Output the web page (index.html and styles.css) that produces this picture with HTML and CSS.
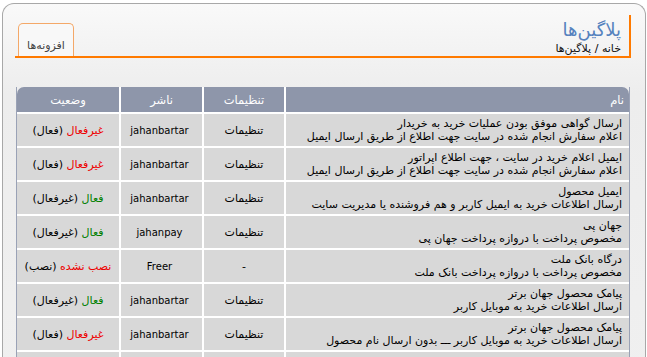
FILE: index.html
```html
<!DOCTYPE html>
<html lang="fa" dir="rtl">
<head>
<meta charset="utf-8">
<title>پلاگین‌ها</title>
<link rel="stylesheet" href="styles.css">
</head>
<body>
<div class="frame">
  <div class="head">
    <div class="titles">
      <h1 class="title">پلاگین‌ها</h1>
      <div class="crumbs"><a href="#">خانه</a> / <a href="#">پلاگین‌ها</a></div>
    </div>
    <div class="tab">افزونه‌ها</div>
  </div>

  <table class="grid">
    <thead>
      <tr>
        <th class="c-name">نام</th>
        <th class="c-set">تنظیمات</th>
        <th class="c-pub">ناشر</th>
        <th class="c-state">وضعیت</th>
      </tr>
    </thead>
    <tbody>
      <tr>
        <td class="c-name">ارسال گواهی موفق بودن عملیات خرید به خریدار<br>اعلام سفارش انجام شده در سایت جهت اطلاع از طریق ارسال ایمیل</td>
        <td>تنظیمات</td>
        <td class="ltr">jahanbartar</td>
        <td><span class="off">غیرفعال</span> <a href="#">(فعال)</a></td>
      </tr>
      <tr>
        <td class="c-name">ایمیل اعلام خرید در سایت ، جهت اطلاع اپراتور<br>اعلام سفارش انجام شده در سایت جهت اطلاع از طریق ارسال ایمیل</td>
        <td>تنظیمات</td>
        <td class="ltr">jahanbartar</td>
        <td><span class="off">غیرفعال</span> <a href="#">(فعال)</a></td>
      </tr>
      <tr>
        <td class="c-name">ایمیل محصول<br>ارسال اطلاعات خرید به ایمیل کاربر و هم فروشنده یا مدیریت سایت</td>
        <td>تنظیمات</td>
        <td class="ltr">jahanbartar</td>
        <td><span class="on">فعال</span> <a href="#">(غیرفعال)</a></td>
      </tr>
      <tr>
        <td class="c-name">جهان پی<br>مخصوص پرداخت با دروازه پرداخت جهان پی</td>
        <td>تنظیمات</td>
        <td class="ltr">jahanpay</td>
        <td><span class="on">فعال</span> <a href="#">(غیرفعال)</a></td>
      </tr>
      <tr>
        <td class="c-name">درگاه بانک ملت<br>مخصوص پرداخت با دروازه پرداخت بانک ملت</td>
        <td>-</td>
        <td class="ltr">Freer</td>
        <td><span class="off">نصب نشده</span> <a href="#">(نصب)</a></td>
      </tr>
      <tr>
        <td class="c-name">پیامک محصول جهان برتر<br>ارسال اطلاعات خرید به موبایل کاربر</td>
        <td>تنظیمات</td>
        <td class="ltr">jahanbartar</td>
        <td><span class="on">فعال</span> <a href="#">(غیرفعال)</a></td>
      </tr>
      <tr>
        <td class="c-name">پیامک محصول جهان برتر<br>ارسال اطلاعات خرید به موبایل کاربر ـــ بدون ارسال نام محصول</td>
        <td>تنظیمات</td>
        <td class="ltr">jahanbartar</td>
        <td><span class="off">غیرفعال</span> <a href="#">(فعال)</a></td>
      </tr>
      <tr>
        <td class="c-name"></td>
        <td></td>
        <td></td>
        <td></td>
      </tr>
    </tbody>
  </table>
</div>
</body>
</html>
```

FILE: styles.css
```css
html, body {
  margin: 0;
  padding: 0;
  background: #ffffff;
}

body {
  font-family: "DejaVu Sans", sans-serif;
  font-size: 11px;
  color: #000;
  overflow: hidden;
}

.frame {
  margin: 3px 1px 0 2px;
  border: 1px solid #a8a8a8;
  border-bottom: none;
  border-radius: 12px 12px 0 0;
  background: linear-gradient(#f9f9f9 0, #ededed 90px, #f0f0f0 100%);
  min-height: 400px;
}

.head {
  display: flex;
  align-items: stretch;
  margin: 11px 14px 0 12px;
  height: 41px;
  border-right: 2px solid #ff7a00;
  border-bottom: 2px solid #ff7a00;
}

.titles {
  padding-right: 8px;
  display: flex;
  flex-direction: column;
}

.title {
  margin: 4px 0 0;
  font-size: 18px;
  font-weight: normal;
  line-height: 22px;
  color: #5582be;
}

.crumbs {
  margin-top: 1px;
  line-height: 14px;
}

.crumbs a {
  color: #111;
  text-decoration: none;
}

.tab {
  margin-right: auto;
  margin-left: 3px;
  margin-top: 8px;
  width: 56px;
  border: 1px solid #f4a868;
  border-bottom: none;
  border-radius: 5px 5px 0 0;
  background: #f8f8f8;
  color: #444;
  text-align: center;
  padding-top: 15px;
  box-sizing: border-box;
  line-height: 14px;
}

.grid {
  margin: 29px 15px 0 13px;
  width: 614px;
  table-layout: fixed;
  border-collapse: separate;
  border-spacing: 0;
  border-left: 1px solid #9aa2b6;
  border-right: 1px solid #9aa2b6;
}

.grid th,
.grid td {
  box-sizing: border-box;
  padding: 0 4px;
  text-align: center;
  vertical-align: middle;
}

.grid th {
  background: #8e96aa;
  color: #fff;
  font-weight: normal;
  font-size: 11.5px;
  height: 25px;
}

.grid thead th:first-child {
  border-top-right-radius: 7px;
}

.grid thead th:last-child {
  border-top-left-radius: 7px;
}

.grid th:not(:last-child),
.grid td:not(:last-child) {
  border-left: 2px solid #fff;
}

.grid td {
  background: #d8d8d8;
  border-top: 2px solid #fff;
  height: 34px;
  line-height: 13px;
}

.grid .c-name {
  text-align: right;
  padding-right: 7px;
  width: 345px;
}

.grid th.c-name {
  padding-right: 5px;
}

.grid .c-set { width: 82px; }
.grid .c-pub { width: 83px; }
.grid .c-state { width: 102px; }

.ltr {
  direction: ltr;
  font-size: 10px;
}

.off { color: #ee0000; }
.on { color: #008000; }

.grid a {
  color: #000;
  text-decoration: none;
}
```
